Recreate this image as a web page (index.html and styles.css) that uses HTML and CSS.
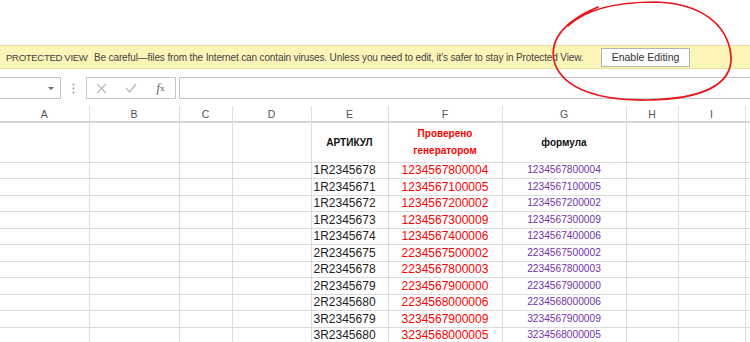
FILE: index.html
```html
<!DOCTYPE html>
<html lang="ru">
<head>
  <meta charset="UTF-8">
  <title>Protected View – Book1</title>
  <link rel="stylesheet" href="styles.css">
</head>
<body>
  <div class="window">
    <div class="top-gap"></div>

    <div class="msgbar">
      <span class="msg-label">PROTECTED VIEW</span>
      <span class="msg-text">Be careful—files from the Internet can contain viruses. Unless you need to edit, it's safer to stay in Protected View.</span>
      <button class="btn-enable">Enable Editing</button>
    </div>

    <div class="formula-bar">
      <div class="namebox"><span class="caret"></span></div>
      <div class="grip">
        <svg width="3" height="11" viewBox="0 0 3 11"><circle cx="1.5" cy="1.5" r="1" fill="#9a9a9a"/><circle cx="1.5" cy="5.5" r="1" fill="#9a9a9a"/><circle cx="1.5" cy="9.5" r="1" fill="#9a9a9a"/></svg>
      </div>
      <div class="fx-buttons">
        <span class="fx-slot">
          <svg width="11" height="11" viewBox="0 0 11 11"><path d="M1 1 L10 10 M10 1 L1 10" stroke="#b9b9b9" stroke-width="1.2" fill="none"/></svg>
        </span>
        <span class="fx-slot">
          <svg width="12" height="10" viewBox="0 0 12 10"><path d="M1 5 L4.5 9 L11 1" stroke="#b9b9b9" stroke-width="1.3" fill="none"/></svg>
        </span>
        <span class="fx-slot fx-label"><i>f</i><sub>x</sub></span>
      </div>
      <div class="formula-input"></div>
    </div>

    <div class="sheet-wrap">
      <table class="sheet">
        <colgroup>
          <col style="width:89px"><col style="width:90px"><col style="width:53px">
          <col style="width:79px"><col style="width:77px"><col style="width:114px">
          <col style="width:124px"><col style="width:52px"><col style="width:67px">
          <col style="width:40px">
        </colgroup>
        <thead>
          <tr><th>A</th><th>B</th><th>C</th><th>D</th><th>E</th><th>F</th><th>G</th><th>H</th><th>I</th><th></th></tr>
        </thead>
        <tbody>
          <tr class="title-row">
            <td></td><td></td><td></td><td></td>
            <td class="head">АРТИКУЛ</td>
            <td class="head red">Проверено<br>генератором</td>
            <td class="head">формула</td>
            <td></td><td></td><td></td>
          </tr>
          <tr><td></td><td></td><td></td><td></td><td>1R2345678</td><td class="red num">1234567800004</td><td class="purple num">1234567800004</td><td></td><td></td><td></td></tr>
          <tr><td></td><td></td><td></td><td></td><td>1R2345671</td><td class="red num">1234567100005</td><td class="purple num">1234567100005</td><td></td><td></td><td></td></tr>
          <tr><td></td><td></td><td></td><td></td><td>1R2345672</td><td class="red num">1234567200002</td><td class="purple num">1234567200002</td><td></td><td></td><td></td></tr>
          <tr><td></td><td></td><td></td><td></td><td>1R2345673</td><td class="red num">1234567300009</td><td class="purple num">1234567300009</td><td></td><td></td><td></td></tr>
          <tr><td></td><td></td><td></td><td></td><td>1R2345674</td><td class="red num">1234567400006</td><td class="purple num">1234567400006</td><td></td><td></td><td></td></tr>
          <tr><td></td><td></td><td></td><td></td><td>2R2345675</td><td class="red num">2234567500002</td><td class="purple num">2234567500002</td><td></td><td></td><td></td></tr>
          <tr><td></td><td></td><td></td><td></td><td>2R2345678</td><td class="red num">2234567800003</td><td class="purple num">2234567800003</td><td></td><td></td><td></td></tr>
          <tr><td></td><td></td><td></td><td></td><td>2R2345679</td><td class="red num">2234567900000</td><td class="purple num">2234567900000</td><td></td><td></td><td></td></tr>
          <tr><td></td><td></td><td></td><td></td><td>2R2345680</td><td class="red num">2234568000006</td><td class="purple num">2234568000006</td><td></td><td></td><td></td></tr>
          <tr><td></td><td></td><td></td><td></td><td>3R2345679</td><td class="red num">3234567900009</td><td class="purple num">3234567900009</td><td></td><td></td><td></td></tr>
          <tr><td></td><td></td><td></td><td></td><td>3R2345680</td><td class="red num">3234568000005</td><td class="purple num">3234568000005</td><td></td><td></td><td></td></tr>
          <tr><td></td><td></td><td></td><td></td><td></td><td></td><td></td><td></td><td></td><td></td></tr>
        </tbody>
      </table>
    </div>

    <!-- hand-drawn marker circle round the button -->
    <svg class="mark" width="750" height="342" viewBox="0 0 750 342">
      <path d="M568 26 C585 10, 615 2, 655 2 C700 3, 728 24, 731 56 C733 86, 700 99, 648 100 C600 101, 564 89, 555 64 C548 42, 562 22, 598 7"
            stroke="#e8151b" stroke-width="1.7" fill="none" stroke-linecap="round"/>
    </svg>
  </div>
</body>
</html>
```

FILE: styles.css
```css
* {
  box-sizing: border-box;
}
body {
  margin: 0;
  background: #fff;
  font-family: "Liberation Sans", Arial, sans-serif;
}
.window {
  position: relative;
  width: 750px;
  height: 342px;
  overflow: hidden;
}
.top-gap {
  height: 45px;
}

/* protected view bar */
.msgbar {
  display: flex;
  align-items: center;
  height: 24px;
  background: #fcf5b8;
  border-top: 1px solid #e9e09e;
  border-bottom: 1px solid #e9e09e;
  font-size: 10px;
  letter-spacing: -0.13px;
  color: #444;
  white-space: nowrap;
}
.msg-label {
  flex: none;
  width: 94px;
  padding-left: 6px;
  font-size: 9.6px;
  letter-spacing: -0.35px;
}
.msg-text {
  flex: none;
  width: 507px;
  overflow: hidden;
}
.btn-enable {
  flex: none;
  width: 89px;
  height: 19px;
  padding: 0;
  border: 1px solid #b3b3b3;
  background: #fdfdfd;
  font: inherit;
  font-size: 10.5px;
  letter-spacing: 0;
  color: #333;
}

/* formula bar */
.formula-bar {
  display: flex;
  height: 37px;
  padding-top: 8px;
}
.namebox {
  position: relative;
  width: 61px;
  height: 22px;
  border: 1px solid #c6c6c6;
  border-left: none;
}
.caret {
  position: absolute;
  right: 6px;
  top: 9px;
  border-left: 3px solid transparent;
  border-right: 3px solid transparent;
  border-top: 3px solid #666;
}
.grip {
  width: 25px;
  display: flex;
  justify-content: center;
  padding-top: 6px;
}
.fx-buttons {
  display: flex;
  width: 90px;
  height: 22px;
  border: 1px solid #c6c6c6;
}
.fx-slot {
  width: 29px;
  display: flex;
  align-items: center;
  justify-content: center;
}
.fx-label {
  font-family: "Liberation Serif", serif;
  font-size: 12px;
  color: #555;
  padding-left: 2px;
}
.fx-label sub {
  font-size: 9px;
  vertical-align: -2px;
}
.formula-input {
  flex: 1;
  margin-left: 3px;
  height: 22px;
  border: 1px solid #c6c6c6;
  border-right: none;
}

/* sheet grid */
.sheet-wrap {
  overflow: hidden;
}
.sheet {
  width: 768px;
  table-layout: fixed;
  border-collapse: collapse;
}
.sheet th {
  height: 16px;
  padding: 0;
  font-size: 10.5px;
  font-weight: normal;
  color: #555;
  text-align: center;
  border-right: 1px solid #e0e0e0;
  border-bottom: 2px solid #d6d6d6;
}
.sheet td {
  height: 16.5px;
  padding: 0 2px;
  font-size: 12px;
  color: #222;
  white-space: nowrap;
  border-right: 1px solid #dcdcdc;
  border-bottom: 1px solid #dcdcdc;
  line-height: 14px;
}
.title-row td {
  height: 40px;
}
.sheet td.head {
  text-align: center;
  font-weight: bold;
  font-size: 10px;
  line-height: 17px;
  color: #111;
}
.sheet td.num {
  text-align: center;
}
.sheet td.red {
  color: #ff0000;
}
.sheet td.purple {
  color: #7233a8;
  font-size: 10.2px;
}

.mark {
  position: absolute;
  left: 0;
  top: 0;
  pointer-events: none;
}
```
